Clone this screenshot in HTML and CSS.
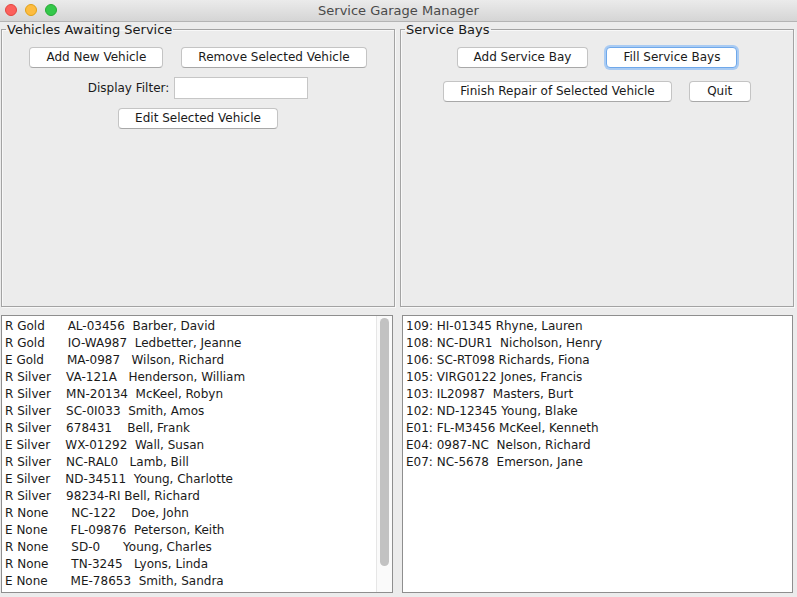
FILE: index.html
```html
<!DOCTYPE html>
<html>
<head>
<meta charset="utf-8">
<title>Service Garage Manager</title>
<link rel="stylesheet" href="styles.css">
</head>
<body>
<div class="window">
  <header class="titlebar">
    <div class="lights">
      <span class="light red"></span>
      <span class="light yellow"></span>
      <span class="light green"></span>
    </div>
    <div class="title">Service Garage Manager</div>
  </header>
  <main class="content">
    <fieldset class="panel panel-left">
      <legend>Vehicles Awaiting Service</legend>
      <div class="panel-body">
        <div class="row row1">
          <button class="btn">Add New Vehicle</button>
          <button class="btn">Remove Selected Vehicle</button>
        </div>
        <div class="row row2">
          <label class="label">Display Filter:</label>
          <input class="field" type="text">
        </div>
        <div class="row row3">
          <button class="btn">Edit Selected Vehicle</button>
        </div>
      </div>
    </fieldset>
    <fieldset class="panel panel-right">
      <legend>Service Bays</legend>
      <div class="panel-body">
        <div class="row row1">
          <button class="btn">Add Service Bay</button>
          <button class="btn focused">Fill Service Bays</button>
        </div>
        <div class="row row2b">
          <button class="btn">Finish Repair of Selected Vehicle</button>
          <button class="btn">Quit</button>
        </div>
      </div>
    </fieldset>
    <div class="list list-left">
      <div class="items">
        <div class="item">R Gold      AL-03456  Barber, David</div>
        <div class="item">R Gold      IO-WA987  Ledbetter, Jeanne</div>
        <div class="item">E Gold      MA-0987   Wilson, Richard</div>
        <div class="item">R Silver    VA-121A   Henderson, William</div>
        <div class="item">R Silver    MN-20134  McKeel, Robyn</div>
        <div class="item">R Silver    SC-0I033  Smith, Amos</div>
        <div class="item">R Silver    678431    Bell, Frank</div>
        <div class="item">E Silver    WX-01292  Wall, Susan</div>
        <div class="item">R Silver    NC-RAL0   Lamb, Bill</div>
        <div class="item">E Silver    ND-34511  Young, Charlotte</div>
        <div class="item">R Silver    98234-RI Bell, Richard</div>
        <div class="item">R None      NC-122    Doe, John</div>
        <div class="item">E None      FL-09876  Peterson, Keith</div>
        <div class="item">R None      SD-0      Young, Charles</div>
        <div class="item">R None      TN-3245   Lyons, Linda</div>
        <div class="item">E None      ME-78653  Smith, Sandra</div>
      </div>
      <div class="track"><div class="thumb"></div></div>
    </div>
    <div class="list list-right">
      <div class="items">
        <div class="item">109: HI-01345 Rhyne, Lauren</div>
        <div class="item">108: NC-DUR1  Nicholson, Henry</div>
        <div class="item">106: SC-RT098 Richards, Fiona</div>
        <div class="item">105: VIRG0122 Jones, Francis</div>
        <div class="item">103: IL20987  Masters, Burt</div>
        <div class="item">102: ND-12345 Young, Blake</div>
        <div class="item">E01: FL-M3456 McKeel, Kenneth</div>
        <div class="item">E04: 0987-NC  Nelson, Richard</div>
        <div class="item">E07: NC-5678  Emerson, Jane</div>
      </div>
    </div>
  </main>
</div>
</body>
</html>
```

FILE: styles.css
```css
* { box-sizing: border-box; }

html, body {
  margin: 0;
  padding: 0;
  width: 797px;
  height: 597px;
  overflow: hidden;
  background: #ececec;
  font-family: "DejaVu Sans", "Liberation Sans", sans-serif;
  font-size: 12px;
  color: #1a1a1a;
}

.window {
  width: 797px;
  height: 597px;
  display: flex;
  flex-direction: column;
  overflow: hidden;
}

.titlebar {
  height: 22px;
  flex: none;
  background: linear-gradient(#ebebeb, #d5d5d5);
  border-bottom: 1px solid #b4b4b4;
  display: flex;
  align-items: center;
  justify-content: center;
  position: relative;
}

.lights {
  position: absolute;
  left: 5px;
  top: 4px;
  display: flex;
  gap: 8px;
}

.light {
  width: 12px;
  height: 12px;
  border-radius: 50%;
  display: block;
}
.red { background: #fc605c; border: 1px solid #e2463f; }
.yellow { background: #fdbc40; border: 1px solid #e1a116; }
.green { background: #34c84a; border: 1px solid #27aa35; }

.title {
  font-size: 13px;
  color: #4a4a4a;
}

.content {
  flex: 1;
  min-height: 0;
  display: grid;
  grid-template-columns: 394px 394px;
  grid-template-rows: 285px minmax(0, 1fr);
  column-gap: 5px;
  row-gap: 0;
  padding: 0 3px 4px 1px;
}

.panel {
  margin: 0;
  padding: 0;
  min-width: 0;
  border: 1px solid #a3a3a3;
  box-shadow: inset 1px 1px 0 #f8f8f8, 1px 1px 0 #f8f8f8;
  height: 285px;
}

.panel legend {
  padding: 0 1px;
  margin-left: 4px;
  font-size: 13px;
  line-height: 15px;
  color: #1a1a1a;
}

.panel-body {
  padding-top: 10px;
  display: flex;
  flex-direction: column;
  gap: 9px;
}

.row {
  display: flex;
  justify-content: center;
  align-items: center;
  gap: 18px;
}

.row2 { gap: 5px; }
.row2b { margin-top: 4px; gap: 17px; }

.btn {
  height: 21px;
  min-width: 62px;
  padding: 0 16px;
  background: #ffffff;
  border: 1px solid #c4c4c4;
  border-bottom-color: #a8a8a8;
  border-radius: 4px;
  font-family: inherit;
  font-size: 12px;
  color: #1a1a1a;
  line-height: 19px;
}

.btn.focused {
  border-color: #6fa8ea;
  box-shadow: 0 0 0 2px #a9cbf3;
}

.label {
  font-size: 12px;
}

.field {
  width: 134px;
  height: 22px;
  border: 1px solid #c6c6c6;
  background: #fff;
  margin: 0;
  padding: 0 3px;
}

.list {
  margin-top: 8px;
  background: #ffffff;
  border: 1px solid #8e8e8e;
  display: flex;
  overflow: hidden;
  min-height: 0;
}

.list-left { margin-right: 2px; }
.list-right { margin-left: 2px; margin-right: 1px; }

.items {
  flex: 1;
  padding: 2px 0 0 3px;
  min-width: 0;
}

.item {
  white-space: pre;
  height: 17px;
  line-height: 17px;
  font-size: 12px;
  color: #1a1a1a;
}

.track {
  width: 16px;
  flex: none;
  background: #fafafa;
  border-left: 1px solid #e6e6e6;
  padding: 2px 0 0 3px;
}

.thumb {
  width: 9px;
  height: 248px;
  border-radius: 5px;
  background: #c2c2c2;
}
```
